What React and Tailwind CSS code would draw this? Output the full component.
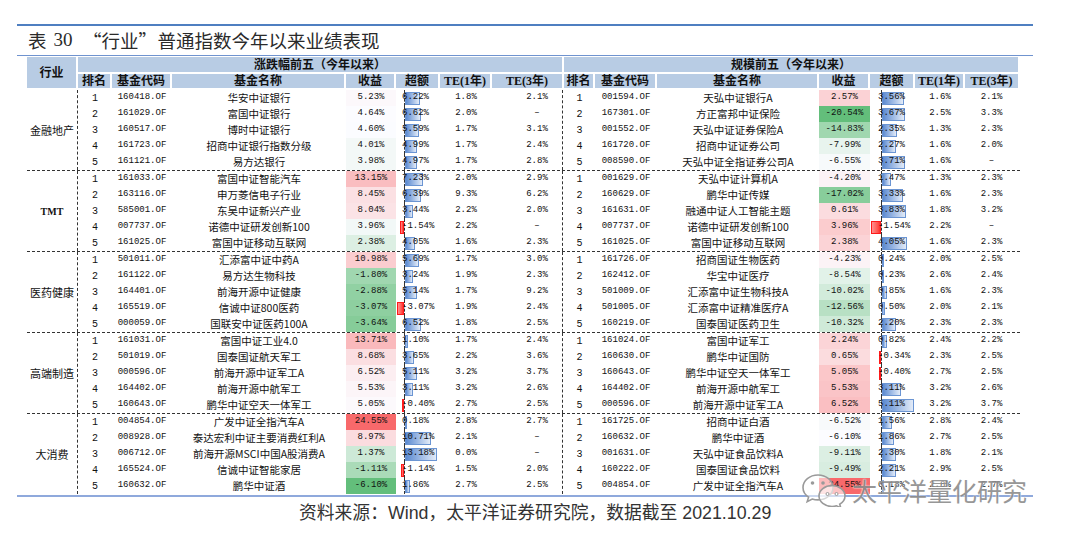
import React from "react";

const groups = [
  {
    name: "金融地产",
    left: [
      ["160418.OF", "华安中证银行", 5.23, 6.22, "1.8%", "2.1%"],
      ["161029.OF", "富国中证银行", 4.64, 6.62, "2.0%", "–"],
      ["160517.OF", "博时中证银行", 4.6, 5.59, "1.7%", "3.1%"],
      ["161723.OF", "招商中证银行指数分级", 4.01, 4.99, "1.7%", "2.4%"],
      ["161121.OF", "易方达银行", 3.98, 4.97, "1.7%", "2.8%"],
    ],
    right: [
      ["001594.OF", "天弘中证银行A", 2.57, 3.56, "1.6%", "2.1%"],
      ["167301.OF", "方正富邦中证保险", -20.54, 3.67, "2.5%", "3.3%"],
      ["001552.OF", "天弘中证证券保险A", -14.83, 2.35, "1.3%", "2.3%"],
      ["161720.OF", "招商中证证券公司", -7.99, 2.27, "1.6%", "2.0%"],
      ["008590.OF", "天弘中证全指证券公司A", -6.55, 3.71, "1.6%", "–"],
    ],
  },
  {
    name: "TMT",
    left: [
      ["161033.OF", "富国中证智能汽车", 13.15, 7.23, "2.0%", "2.9%"],
      ["163116.OF", "申万菱信电子行业", 8.45, 6.39, "9.3%", "6.2%"],
      ["585001.OF", "东吴中证新兴产业", 8.04, 3.44, "2.2%", "2.0%"],
      ["007737.OF", "诺德中证研发创新100", 3.96, -1.54, "2.2%", "–"],
      ["161025.OF", "富国中证移动互联网", 2.38, 4.05, "1.6%", "2.3%"],
    ],
    right: [
      ["001629.OF", "天弘中证计算机A", -4.2, 1.47, "1.3%", "2.3%"],
      ["160629.OF", "鹏华中证传媒", -17.02, 3.33, "1.6%", "2.3%"],
      ["161631.OF", "融通中证人工智能主题", 0.61, 3.83, "1.8%", "3.2%"],
      ["007737.OF", "诺德中证研发创新100", 3.96, -1.54, "2.2%", "–"],
      ["161025.OF", "富国中证移动互联网", 2.38, 4.05, "1.6%", "2.3%"],
    ],
  },
  {
    name: "医药健康",
    left: [
      ["501011.OF", "汇添富中证中药A", 10.98, 5.69, "1.7%", "3.0%"],
      ["161122.OF", "易方达生物科技", -1.8, 3.24, "1.9%", "2.3%"],
      ["164401.OF", "前海开源中证健康", -2.88, 5.14, "1.7%", "9.2%"],
      ["165519.OF", "信诚中证800医药", -3.07, -3.07, "1.9%", "2.4%"],
      ["000059.OF", "国联安中证医药100A", -3.64, 6.52, "1.8%", "2.5%"],
    ],
    right: [
      ["161726.OF", "招商国证生物医药", -4.23, 0.24, "2.0%", "2.5%"],
      ["162412.OF", "华宝中证医疗", -8.54, 0.23, "2.6%", "2.4%"],
      ["501009.OF", "汇添富中证生物科技A", -10.02, 0.85, "1.6%", "2.3%"],
      ["501005.OF", "汇添富中证精准医疗A", -12.56, 0.5, "2.0%", "2.1%"],
      ["160219.OF", "国泰国证医药卫生", -10.32, 2.2, "2.3%", "2.3%"],
    ],
  },
  {
    name: "高端制造",
    left: [
      ["161031.OF", "富国中证工业4.0", 13.71, 1.1, "1.7%", "2.4%"],
      ["501019.OF", "国泰国证航天军工", 8.68, 3.65, "2.2%", "3.6%"],
      ["000596.OF", "前海开源中证军工A", 6.52, 5.11, "3.2%", "3.7%"],
      ["164402.OF", "前海开源中航军工", 5.53, 3.11, "3.2%", "2.6%"],
      ["160643.OF", "鹏华中证空天一体军工", 5.05, -0.4, "2.7%", "2.5%"],
    ],
    right: [
      ["161024.OF", "富国中证军工", 2.24, 0.82, "2.4%", "2.2%"],
      ["160630.OF", "鹏华中证国防", 0.65, -0.34, "2.3%", "2.5%"],
      ["160643.OF", "鹏华中证空天一体军工", 5.05, -0.4, "2.7%", "2.5%"],
      ["164402.OF", "前海开源中航军工", 5.53, 3.11, "3.2%", "2.6%"],
      ["000596.OF", "前海开源中证军工A", 6.52, 5.11, "3.2%", "3.7%"],
    ],
  },
  {
    name: "大消费",
    left: [
      ["004854.OF", "广发中证全指汽车A", 24.55, 0.18, "2.8%", "2.7%"],
      ["008928.OF", "泰达宏利中证主要消费红利A", 8.97, 10.71, "2.1%", "–"],
      ["006712.OF", "前海开源MSCI中国A股消费A", 1.37, 13.18, "0.0%", "–"],
      ["165524.OF", "信诚中证智能家居", -1.11, -1.14, "1.5%", "2.0%"],
      ["160632.OF", "鹏华中证酒", -6.1, 1.86, "2.7%", "2.5%"],
    ],
    right: [
      ["161725.OF", "招商中证白酒", -6.52, 1.56, "2.8%", "2.4%"],
      ["160632.OF", "鹏华中证酒", -6.1, 1.86, "2.7%", "2.5%"],
      ["001631.OF", "天弘中证食品饮料A", -9.11, 2.3, "1.8%", "2.1%"],
      ["160222.OF", "国泰国证食品饮料", -9.49, 2.21, "2.9%", "2.5%"],
      ["004854.OF", "广发中证全指汽车A", 24.55, 0.18, "2.8%", "2.7%"],
    ],
  },
];

// column widths per side
const SIDES = {
  L: {
    rank: "w-[34px]",
    code: "w-[60px]",
    name: "w-[174px]",
    ret: "w-[50px]",
    exc: "w-[44px]",
    te1: "w-[52px]",
    te3: "w-[70px] pl-[20px]",
    neg: "w-[8px]",
    txt: "left-[6px]",
    scale: 2.43,
  },
  R: {
    rank: "w-[31px]",
    code: "w-[62px]",
    name: "w-[162px]",
    ret: "w-[51px]",
    exc: "w-[45px]",
    te1: "w-[50px]",
    te3: "w-[53px]",
    neg: "w-[11px]",
    txt: "left-[8px]",
    scale: 6.26,
  },
};

const HEADS = [
  ["rank", "排名"],
  ["code", "基金代码"],
  ["name", "基金名称"],
  ["ret", "收益"],
  ["exc", "超额"],
  ["te1", "TE(1年)"],
  ["te3", "TE(3年)"],
];

const MONO = "font-['Liberation_Mono','Noto_Sans_CJK_SC',monospace] text-[9px]";
const CJK = "font-['Noto_Sans_CJK_SC',sans-serif]";
const HEADF = "font-['Liberation_Serif','Noto_Sans_CJK_SC',serif] font-bold text-[12px]";

// excel style 3 colour scale, red / white / green, midpoint = median
const scaleFor = (side) => {
  const vals = groups.flatMap((g) => g[side].map((r) => r[2])).sort((a, b) => a - b);
  return { min: vals[0], mid: vals[12], max: vals[vals.length - 1] };
};
const SCALE = { left: scaleFor("left"), right: scaleFor("right") };

const heat = (v, s) => {
  const lo = [99, 190, 123];
  const md = [252, 252, 255];
  const hi = [248, 105, 107];
  let to, t;
  if (v >= s.mid) {
    to = hi;
    t = (v - s.mid) / (s.max - s.mid);
  } else {
    to = lo;
    t = (s.mid - v) / (s.mid - s.min);
  }
  const c = md.map((m, i) => Math.round(m + (to[i] - m) * t));
  return `rgb(${c[0]},${c[1]},${c[2]})`;
};

const pct = (v) => v.toFixed(2) + "%";

const ExcessCell = ({ v, side }) => {
  const s = SIDES[side];
  const w = Math.abs(v) * s.scale;
  return (
    <div className={`${s.exc} relative h-full flex`}>
      <div className={`${s.neg} h-full flex items-center justify-end`}>
        {v < 0 && (
          <div
            className="h-[13px] border border-[#ff1a1a] bg-linear-to-l from-[#ff2a2a] to-[#ff8f8f]"
            style={{ width: w }}
          />
        )}
      </div>
      <div className="flex-1 h-full border-l border-dashed border-[#333] flex items-center">
        {v > 0 && (
          <div
            className="h-[13px] border border-[#6b95d3] bg-linear-to-r from-[#5c8ad0] to-[#e3ebf7]"
            style={{ width: w }}
          />
        )}
      </div>
      <span className={`absolute ${s.txt} top-0 h-full flex items-center ${MONO} text-[#111]`}>
        {pct(v)}
      </span>
    </div>
  );
};

const Row = ({ r, i, side, sc }) => {
  const s = SIDES[side];
  return (
    <div className="h-[16px] flex items-center text-[#111]">
      <div className={`${s.rank} text-center ${MONO} text-[10px]`}>{i + 1}</div>
      <div className={`${s.code} text-center ${MONO}`}>{r[0]}</div>
      <div className={`${s.name} text-center whitespace-nowrap ${CJK} text-[10.5px] leading-[16px]`}>
        {r[1]}
      </div>
      <div
        className={`${s.ret} h-full flex items-center justify-center ${MONO}`}
        style={{ background: heat(r[2], sc) }}
      >
        {pct(r[2])}
      </div>
      <ExcessCell v={r[3]} side={side} />
      <div className={`${s.te1} text-center ${MONO}`}>{r[4]}</div>
      <div className={`${s.te3} text-center ${MONO}`}>{r[5]}</div>
    </div>
  );
};

const HeadCells = ({ side }) => {
  const s = SIDES[side];
  return (
    <div className="flex h-[14px]">
      {HEADS.map(([k, label], i) => (
        <div key={k} className={`${s[k].split(" ")[0]} h-full`}>
          <div
            className={`h-full bg-[#b8cce4] flex items-center justify-center ${HEADF} text-[#111] ${
              i < HEADS.length - 1 ? "mr-[2px]" : ""
            }`}
          >
            {label}
          </div>
        </div>
      ))}
    </div>
  );
};

const WeChat = () => (
  <svg width="46" height="34" viewBox="0 0 46 34">
    <path
      d="M17 2C8.7 2 2 7.6 2 14.5c0 3.9 2.2 7.4 5.6 9.7L6.2 28.6l5-2.6c1.8.6 3.8.9 5.8.9 8.3 0 15-5.6 15-12.4S25.3 2 17 2z"
      fill="rgba(255,255,255,0.55)"
      stroke="#9a9a9a"
      strokeWidth="1.6"
    />
    <path
      d="M31 12.5c-7.2 0-13 4.7-13 10.5s5.8 10.5 13 10.5c1.6 0 3.1-.2 4.5-.7l4.3 2.1-1.1-3.7C42 29.3 44 26.3 44 23c0-5.8-5.8-10.5-13-10.5z"
      fill="rgba(255,255,255,0.6)"
      stroke="#9a9a9a"
      strokeWidth="1.6"
    />
    <circle cx="11.5" cy="10" r="1.8" fill="#9a9a9a" />
    <circle cx="22" cy="10" r="1.8" fill="#9a9a9a" />
    <circle cx="26.5" cy="21" r="1.5" fill="#fff" stroke="#9a9a9a" />
    <circle cx="35.5" cy="21" r="1.5" fill="#fff" stroke="#9a9a9a" />
  </svg>
);

export default function App() {
  return (
    <div className="relative w-[1080px] h-[539px] bg-white overflow-hidden">
      <div className="pt-[24px] pl-[17px] w-[1033px]">
        <div className="h-[2px] bg-[#4f7fc1]" />
        <div className="h-[29px] pl-[11px] flex items-center text-[18.5px] text-[#2a2a2a] whitespace-nowrap">
          <span className={CJK}>表</span>
          <span className="ml-[7px] font-['Liberation_Serif',serif] text-[19px]">30</span>
          <span className={`${CJK} ml-[10px] flex items-center`}>
            <span className="inline-block w-[19px] text-right">“</span>
            行业
            <span className="inline-block w-[19px] text-left">”</span>
            普通指数今年以来业绩表现
          </span>
        </div>
        <div className="h-[1px] bg-[#6f93cf]" />

        {/* table */}
        <div className="pl-[10px] pt-[1px]">
          {/* header */}
          <div className="flex gap-[2px]">
            <div className={`w-[49px] h-[31px] bg-[#b8cce4] flex items-center justify-center ${HEADF} text-[#111]`}>
              行业
            </div>
            <div className="flex flex-col gap-[2px]">
              <div className="flex gap-[2px] h-[15px]">
                <div className={`w-[484px] bg-[#b8cce4] flex items-center justify-center ${HEADF} text-[#111]`}>
                  涨跌幅前五（今年以来）
                </div>
                <div className={`w-[454px] bg-[#b8cce4] flex items-center justify-center ${HEADF} text-[#111]`}>
                  规模前五（今年以来）
                </div>
              </div>
              <div className="flex gap-[2px]">
                <div className="w-[484px]">
                  <HeadCells side="L" />
                </div>
                <div className="w-[454px]">
                  <HeadCells side="R" />
                </div>
              </div>
            </div>
          </div>

          {/* body */}
          <div className="mt-[2px] w-[993px]">
            {groups.map((g, gi) => (
              <div
                key={g.name}
                className={`flex ${gi < groups.length - 1 ? "border-b border-dashed border-[#333]" : ""}`}
              >
                <div
                  className={`w-[51px] h-[80px] border-r border-dashed border-[#333] flex items-center justify-center text-[#111] ${
                    g.name === "TMT"
                      ? "font-['Liberation_Serif',serif] font-bold text-[10px]"
                      : `${CJK} text-[11px]`
                  }`}
                >
                  {g.name}
                </div>
                <div className="w-[485px] border-r border-dashed border-[#333]">
                  {g.left.map((r, i) => (
                    <Row key={i} r={r} i={i} side="L" sc={SCALE.left} />
                  ))}
                </div>
                <div className="w-[457px] pl-[1px]">
                  {g.right.map((r, i) => (
                    <Row key={i} r={r} i={i} side="R" sc={SCALE.right} />
                  ))}
                </div>
              </div>
            ))}
          </div>
        </div>

        <div className="mt-[1px] h-[2px] bg-[#8fa9dc]" />
        <div className="mt-[6px] pl-[282px] text-[17.8px] leading-[20px] text-[#333] whitespace-nowrap font-['Liberation_Sans','Noto_Sans_CJK_SC',sans-serif]">
          资料来源：Wind，太平洋证券研究院，数据截至 2021.10.29
        </div>
      </div>

      {/* watermark */}
      <div className="absolute left-[801px] top-[473px] flex items-center gap-[5px]">
        <WeChat />
        <span
          className={`${CJK} text-[25px] leading-[30px] text-[#8c8c8c] opacity-90 [text-shadow:0_0_2px_#fff,0_0_1px_#fff]`}
        >
          太平洋量化研究
        </span>
      </div>
    </div>
  );
}
